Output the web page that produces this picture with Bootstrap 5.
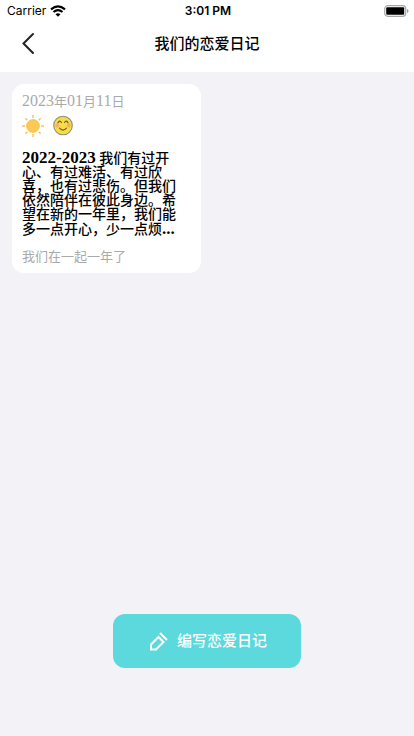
<!DOCTYPE html>
<html lang="zh-CN">
<head>
<meta charset="utf-8">
<meta name="viewport" content="width=device-width, initial-scale=1">
<title>我们的恋爱日记</title>
<link href="https://cdn.jsdelivr.net/npm/bootstrap@5.3.0/dist/css/bootstrap.min.css" rel="stylesheet">
<style>
  body { background: #f2f2f7; color: #000; font-family: "Liberation Serif", "Noto Sans CJK SC", serif; }
  .status { font: 500 12px/22px Inter, sans-serif; padding: 0 5px 0 7px; }
  .status-time { font-weight: 600; }
  .topbar { height: 50px; padding: 0 20px; }
  .side { width: 40px; height: 40px; }
  .page-title { font-size: 15px; line-height: 20px; font-weight: 500; }
  .entries { padding: 12px; }
  .entries .row { --bs-gutter-x: 12px; --bs-gutter-y: 12px; }
  .entry { border-radius: 12px; padding: 8px 14px 8px 10px; color: #000; }
  .muted { color: #aaa; font-size: 13px; line-height: 17px; }
  .muted .num { font-size: 16px; }
  .moods { gap: 8px; padding: 4px 0 0; }
  .entry-text { font-size: 14px; line-height: 14px; font-weight: 500; margin: 13px 0 11px; }
  .entry-text .num { font-size: 17px; font-weight: 700; }
  .write { width: 188px; height: 54px; border-radius: 12px; background: #5cd9dd; color: #fff; font-size: 15px; line-height: 20px; font-weight: 500; gap: 8px; margin-bottom: 68px; }
  .write:hover { background: #4ccbd0; color: #fff; }
</style>
</head>
<body>
<div class="d-flex flex-column min-vh-100">
  <header class="bg-white">
    <div class="status d-flex align-items-center">
      <div class="col d-flex align-items-center gap-1 fw-normal">
        <span>Carrier</span>
        <svg width="16" height="12" viewBox="0 0 16 12" fill="none" stroke="#000" stroke-width="2.2" aria-hidden="true"><path d="M1 4.3Q8-1.7 15 4.3M3.5 7Q8 3.3 12.500 7"/><path d="M8 11.700 5.500 9.200Q8 7.200 10.500 9.200Z" fill="#000" stroke="none"/></svg>
      </div>
      <span class="status-time">3:01 PM</span>
      <div class="col d-flex justify-content-end">
        <svg width="25" height="12" viewBox="0 0 25 12" aria-hidden="true"><rect x=".7" y=".7" width="21" height="10.600" rx="3" fill="#fff" stroke="#a6a6a6" stroke-width="1.200"/><rect x="2.200" y="2.200" width="18" height="7.600" rx="1"/><path d="M23 4v4q1.500-.6 1.500-2T23 4" fill="#999"/></svg>
      </div>
    </div>
    <nav class="topbar d-flex align-items-start justify-content-between">
      <button type="button" class="side btn border-0 p-0 d-flex align-items-center" aria-label="返回">
        <svg width="16" height="26" viewBox="0 0 16 26" fill="none" stroke="#222" stroke-width="2" stroke-linecap="round"><path d="M13 5 3.500 14.500 13 24"/></svg>
      </button>
      <h1 class="page-title m-0 align-self-start pt-2 mt-1">我们的恋爱日记</h1>
      <span class="side"></span>
    </nav>
  </header>

  <main class="entries flex-grow-1">
    <div class="row">
      <div class="col-6">
        <article class="entry card border-0">
          <time class="muted" datetime="2023-01-11"><span class="num">2023</span>年<span class="num">01</span>月<span class="num">11</span>日</time>
          <div class="moods d-flex align-items-center">
            <svg width="22" height="24" viewBox="0 0 22 24" role="img" aria-label="晴"><circle cx="11" cy="12" r="6.400" fill="#fcc951" stroke="#f7b950" stroke-width=".8"/><path d="M11 1v3M11 20v3M0 12h3M19 12h3M3.300 4.300l2 2M16.700 17.700l2 2M3.300 19.700l2-2M16.700 6.300l2-2" stroke="#fbc456" stroke-width="1.500"/></svg>
            <svg width="22" height="24" viewBox="0 0 22 24" fill="none" stroke-linecap="round" role="img" aria-label="开心"><circle cx="11" cy="11.500" r="9.300" fill="#f8dc45" stroke="#8e8e80" stroke-width="1.100"/><path d="M5.800 9Q7.700 5.500 9.500 8.500M12.500 8.500Q14.300 5.500 16.200 9M7.500 14.200Q11 18 14.500 14.200" stroke="#66602c" stroke-width="1.100"/><circle cx="5.200" cy="11.500" r="1.900" fill="#f8ad66"/><circle cx="16.800" cy="11.500" r="1.900" fill="#f8ad66"/></svg>
          </div>
          <p class="entry-text"><span class="num">2022-2023</span> 我们有过开心、有过难活、有过欣喜，也有过悲伤。但我们依然陪伴在彼此身边。希望在新的一年里，我们能多一点开心，少一点烦<span class="num">...</span></p>
          <div class="muted">我们在一起一年了</div>
        </article>
      </div>
    </div>
  </main>

  <footer class="d-flex justify-content-center">
    <button type="button" class="write btn border-0 p-0 d-flex align-items-center justify-content-center">
      <svg width="22" height="20" viewBox="-2 0 22 20" fill="none" stroke="#fff" stroke-width="2" aria-hidden="true"><path d="M2 18.500v-5L9.500 6l5 5L7 18.500ZM11 2l7 7"/></svg>
      <span>编写恋爱日记</span>
    </button>
  </footer>
</div>
<script src="https://cdn.jsdelivr.net/npm/bootstrap@5.3.0/dist/js/bootstrap.bundle.min.js"></script>
</body>
</html>
